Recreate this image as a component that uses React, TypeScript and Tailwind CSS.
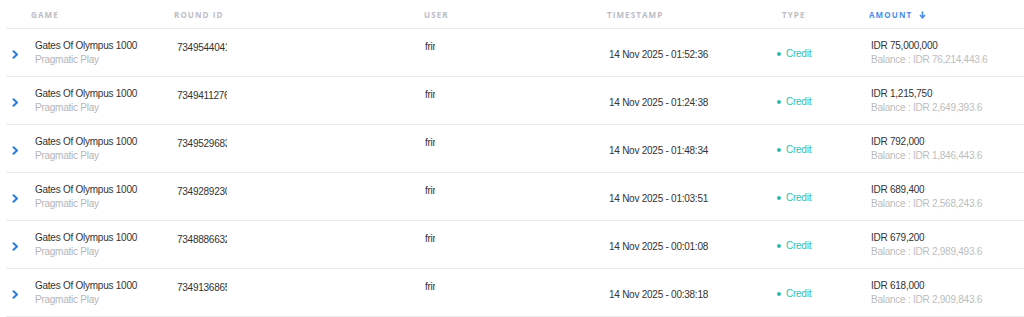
import React from "react";

type Row = {
  game: string;
  provider: string;
  roundId: string;
  user: string;
  time: string;
  amount: string;
  balance: string;
};

const rows: Row[] = [
  { game: "Gates Of Olympus 1000", provider: "Pragmatic Play", roundId: "7349544041", user: "frir", time: "14 Nov 2025 - 01:52:36", amount: "IDR 75,000,000", balance: "Balance : IDR 76,214,443.6" },
  { game: "Gates Of Olympus 1000", provider: "Pragmatic Play", roundId: "7349411276", user: "frir", time: "14 Nov 2025 - 01:24:38", amount: "IDR 1,215,750", balance: "Balance : IDR 2,649,393.6" },
  { game: "Gates Of Olympus 1000", provider: "Pragmatic Play", roundId: "7349529683", user: "frir", time: "14 Nov 2025 - 01:48:34", amount: "IDR 792,000", balance: "Balance : IDR 1,846,443.6" },
  { game: "Gates Of Olympus 1000", provider: "Pragmatic Play", roundId: "7349289230", user: "frir", time: "14 Nov 2025 - 01:03:51", amount: "IDR 689,400", balance: "Balance : IDR 2,568,243.6" },
  { game: "Gates Of Olympus 1000", provider: "Pragmatic Play", roundId: "7348886632", user: "frir", time: "14 Nov 2025 - 00:01:08", amount: "IDR 679,200", balance: "Balance : IDR 2,989,493.6" },
  { game: "Gates Of Olympus 1000", provider: "Pragmatic Play", roundId: "7349136865", user: "frir", time: "14 Nov 2025 - 00:38:18", amount: "IDR 618,000", balance: "Balance : IDR 2,909,843.6" },
];

const cols = "grid grid-cols-[25px_143px_250px_183px_175px_87px_1fr]";

function Chevron() {
  return (
    <svg width="7" height="9" viewBox="0 0 7 9" className="text-[#2a7be0]">
      <path d="M1.5 1.2 L5 4.5 L1.5 7.8" fill="none" stroke="currentColor" strokeWidth="2" strokeLinecap="round" strokeLinejoin="round" />
    </svg>
  );
}

export default function App() {
  return (
    <div className="w-[1024px] h-[317px] bg-white overflow-hidden font-['Liberation_Sans',Arial,sans-serif]">
      <div className="ml-[6px]">
        <div className={`${cols} h-[29px] items-center border-b border-[#ebebeb] font-['Open_Sans',sans-serif] text-[8px] font-bold tracking-[1.1px] text-[#bcbcc4] uppercase`}>
          <div />
          <div className="pt-px">Game</div>
          <div className="pt-px">Round ID</div>
          <div className="pt-px">User</div>
          <div className="pt-px">Timestamp</div>
          <div className="pt-px">Type</div>
          <div className="pt-px flex items-center gap-[7px] text-[#4a8fe6]">
            Amount
            <svg width="7" height="8" viewBox="0 0 7 8">
              <path d="M3.5 0.5 V6.5 M1 4 L3.5 6.8 L6 4" fill="none" stroke="currentColor" strokeWidth="1.6" />
            </svg>
          </div>
        </div>
        {rows.map((r, i) => (
          <div key={i} className={`${cols} h-[48px] items-center border-b border-[#ebebeb] text-[10px] tracking-[-0.25px] leading-[14px]`}>
            <div className="flex pl-[6px] pt-[3px]">
              <Chevron />
            </div>
            <div className="pl-[4px] pt-px">
              <div className="text-[#333]">{r.game}</div>
              <div className="text-[#b5b5b5]">{r.provider}</div>
            </div>
            <div className="pl-[3px] h-[28px] pt-[2px]">
              <div className="w-[50px] overflow-hidden whitespace-nowrap text-[#333]">{r.roundId}</div>
            </div>
            <div className="pl-[1px] h-[28px] pt-px">
              <div className="w-[10px] overflow-hidden whitespace-nowrap text-[#333]">{r.user}</div>
            </div>
            <div className="pl-[2px] pt-[4px] text-[#333]">{r.time}</div>
            <div className="-ml-[5px] pt-[2px] flex items-center gap-[5px] text-[#2cbcae]">
              <span className="w-[4px] h-[4px] rounded-full bg-[#2cbcae]" />
              Credit
            </div>
            <div className="pl-[2px] pt-px">
              <div className="text-[#333]">{r.amount}</div>
              <div className="text-[#bdbdbd]">{r.balance}</div>
            </div>
          </div>
        ))}
      </div>
    </div>
  );
}
